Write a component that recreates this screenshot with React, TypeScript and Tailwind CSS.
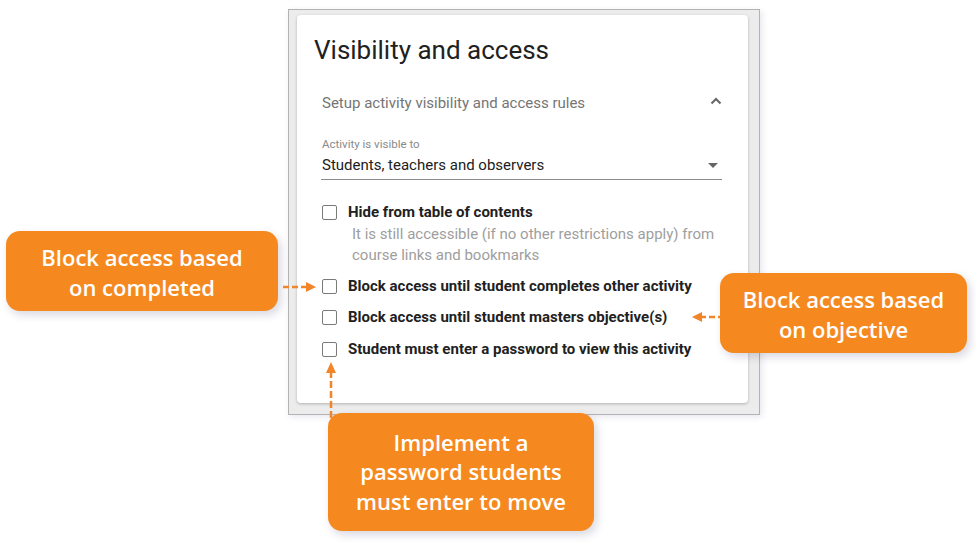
import React from 'react';

const Checkbox = () => (
    <span className="w-[15px] h-[15px] shrink-0 rounded-[2px] border-[1.5px] border-[#7a7a7a] bg-white" />
);

const CheckRow = ({ label, className = '' }: { label: string; className?: string }) => (
    <div className={`flex items-center gap-[11px] h-[20px] ${className}`}>
        <Checkbox />
        <span className="text-[15px] leading-[20px] font-bold text-[#212121]">{label}</span>
    </div>
);

const Callout = ({ lines, className }: { lines: string[]; className: string }) => (
    <div
        className={`absolute flex flex-col items-center justify-center rounded-[14px] bg-[#f5891f] text-white font-semibold text-[22px] shadow-[3px_4px_8px_rgba(40,40,90,0.18)] ${className}`}
        style={{ fontFamily: '"Open Sans", Lato, sans-serif' }}
    >
        {lines.map((l, i) => (
            <span key={i}>{l}</span>
        ))}
    </div>
);

export default function App() {
    return (
        <div className="relative w-[976px] h-[545px] overflow-hidden bg-white" style={{ fontFamily: 'Roboto, "Liberation Sans", sans-serif' }}>
            {/* screenshot frame */}
            <div className="ml-[288px] mt-[9px] w-[472px] h-[406px] border border-[#b3b3b3] bg-[#ececec] pt-[5px] pl-[8px] shadow-[2px_2px_6px_rgba(60,60,120,0.12)]">
                <div className="w-[451px] h-[388px] rounded-[4px] bg-white shadow-[0_1px_3px_rgba(0,0,0,0.25)] pt-[19px]">
                    <h2 className="pl-[17px] text-[26px] leading-[32px] text-[#212121]">Visibility and access</h2>

                    <div className="pl-[24px] pr-[26px]">
                        <div className="mt-[27px] flex items-center justify-between pl-[1px] h-[20px]">
                            <span className="text-[15px] leading-[20px] text-[#757575]">Setup activity visibility and access rules</span>
                            <svg width="12" height="8" viewBox="0 0 12 8" className="-mt-[4px]">
                                <path d="M1.5 6.5 L6 2 L10.5 6.5" fill="none" stroke="#666" strokeWidth="2" />
                            </svg>
                        </div>

                        <div className="mt-[24px] pl-[1px] text-[11.5px] leading-[14px] text-[#8a8a8a]">Activity is visible to</div>
                        <div className="mt-[4px] flex items-center justify-between border-b border-[#8c8c8c] pb-[4px] pl-[1px]">
                            <span className="text-[15px] leading-[20px] text-[#212121]">Students, teachers and observers</span>
                            <svg width="10" height="5" viewBox="0 0 10 5" className="mr-[4px]">
                                <path d="M0 0 L10 0 L5 5 Z" fill="#666" />
                            </svg>
                        </div>

                        <div className="pl-[1px]">
                            <CheckRow label="Hide from table of contents" className="mt-[22px]" />
                            <p className="mt-[1.5px] pl-[30px] text-[15px] leading-[21px] text-[#9e9e9e]">
                                It is still accessible (if no other restrictions apply) from
                                <br />
                                course links and bookmarks
                            </p>
                            <CheckRow label="Block access until student completes other activity" className="mt-[10.5px]" />
                            <CheckRow label="Block access until student masters objective(s)" className="mt-[11px]" />
                            <CheckRow label="Student must enter a password to view this activity" className="mt-[12px]" />
                        </div>
                    </div>
                </div>
            </div>

            {/* callouts */}
            <Callout lines={['Block access based', 'on completed']} className="left-[6px] top-[231px] w-[272px] h-[80px] pt-[1px] leading-[30px]" />
            <Callout lines={['Block access based', 'on objective']} className="left-[720px] top-[273px] w-[247px] h-[80px] pt-[1px] leading-[30px]" />
            <Callout
                lines={['Implement a', 'password students', 'must enter to move']}
                className="left-[328px] top-[413px] w-[266px] h-[118px] leading-[29.5px]"
            />

            {/* arrows */}
            <svg className="absolute left-[282px] top-[281px]" width="36" height="12" viewBox="0 0 36 12">
                <line x1="1" y1="6" x2="26" y2="6" stroke="#f0852a" strokeWidth="2.5" strokeDasharray="6 3" />
                <path d="M24 1 L34 6 L24 11 Z" fill="#f0852a" />
            </svg>
            <svg className="absolute left-[690px] top-[311px]" width="30" height="12" viewBox="0 0 30 12">
                <path d="M2 6 L12 1 L12 11 Z" fill="#f0852a" />
                <line x1="10" y1="6" x2="30" y2="6" stroke="#f0852a" strokeWidth="2.5" strokeDasharray="6 3" />
            </svg>
            <svg className="absolute left-[325px] top-[360px]" width="12" height="58" viewBox="0 0 12 58">
                <path d="M6 2 L11 13 L1 13 Z" fill="#f0852a" />
                <line x1="6" y1="11" x2="6" y2="58" stroke="#f0852a" strokeWidth="2.5" strokeDasharray="7 3" />
            </svg>
        </div>
    );
}
